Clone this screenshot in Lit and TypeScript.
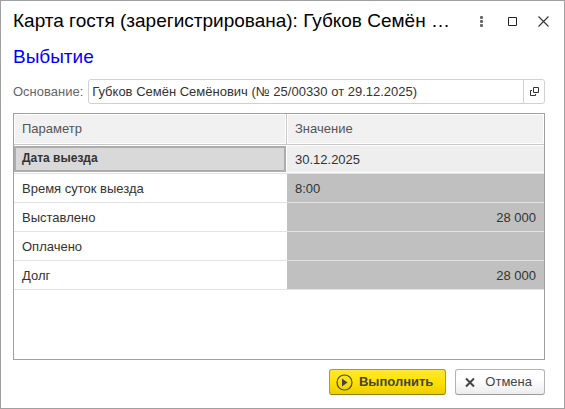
import { LitElement, html, css } from "lit";
import { customElement, property, state } from "lit/decorators.js";
import { classMap } from "lit/directives/class-map.js";

interface Row {
  name: string;
  value: string;
  numeric?: boolean;
  editable?: boolean;
}

@customElement("param-table")
export class ParamTable extends LitElement {
  @property({ attribute: false }) rows: Row[] = [];
  @state() private current = 0;

  static styles = css`
    :host {
      display: block;
      border: 1px solid #a0a0a0;
      background: #fff;
      overflow: auto;
    }
    table {
      width: 100%;
      table-layout: fixed;
      border-collapse: separate;
      border-spacing: 0;
    }
    .name-col {
      width: 273px;
    }
    th,
    td {
      box-sizing: border-box;
      height: 29px;
      padding: 2px 8px 0;
      text-align: left;
      font-weight: normal;
      white-space: nowrap;
      color: #333;
      border-bottom: 1px solid #e2e2e2;
    }
    th {
      height: 31px;
      padding: 0 8px;
      color: #555;
      background: #f1f1f1;
      border-bottom-color: #c8c8c8;
      box-shadow: inset 0 0 0 1px #fff;
    }
    th:first-child {
      border-right: 1px solid #c8c8c8;
    }
    .value {
      background: #c0c0c0;
    }
    .numeric {
      text-align: right;
    }
    .editable {
      background: #eee;
      box-shadow: inset 0 1px #fff, inset 0 -1px #fff;
    }
    .current {
      padding: 1px 1px 1px 0;
    }
    .mark {
      box-sizing: border-box;
      height: 26px;
      padding: 0 6px;
      border: 2px solid #acacac;
      background: #d9d9d9;
      font-weight: bold;
      font-size: 12px;
      line-height: 20px;
    }
  `;

  render() {
    return html`
      <table>
        <colgroup>
          <col class="name-col" />
          <col />
        </colgroup>
        <thead>
          <tr>
            <th scope="col">Параметр</th>
            <th scope="col">Значение</th>
          </tr>
        </thead>
        <tbody>
          ${this.rows.map(
            (row, i) => html`
              <tr @click=${() => (this.current = i)}>
                <td class=${classMap({ current: i === this.current })}>
                  ${i === this.current
                    ? html`<div class="mark">${row.name}</div>`
                    : row.name}
                </td>
                <td
                  class=${classMap({
                    value: true,
                    numeric: !!row.numeric,
                    editable: !!row.editable,
                  })}
                >
                  ${row.value}
                </td>
              </tr>
            `
          )}
        </tbody>
      </table>
    `;
  }
}

@customElement("app-root")
export class AppRoot extends LitElement {
  private rows: Row[] = [
    { name: "Дата выезда", value: "30.12.2025", editable: true },
    { name: "Время суток выезда", value: "8:00" },
    { name: "Выставлено", value: "28 000", numeric: true },
    { name: "Оплачено", value: "", numeric: true },
    { name: "Долг", value: "28 000", numeric: true },
  ];

  static styles = css`
    :host {
      box-sizing: border-box;
      display: flex;
      flex-direction: column;
      min-height: 100vh;
      border: 1px solid #a0a0a0;
      background: #fff;
      color: #333;
      font: 13px/16px "Liberation Sans", Arial, sans-serif;
    }
    button,
    input {
      font: inherit;
      color: inherit;
      margin: 0;
    }
    svg {
      display: block;
      flex: none;
    }
    header {
      display: flex;
      align-items: center;
      height: 40px;
      padding: 0 5px 0 12px;
    }
    h1,
    h2 {
      margin: 0;
      font-size: 19px;
      font-weight: normal;
      color: #000;
    }
    h1 {
      flex: 1;
      min-width: 0;
      line-height: 24px;
      white-space: nowrap;
      overflow: hidden;
      text-overflow: ellipsis;
    }
    .tool {
      display: flex;
      justify-content: center;
      align-items: center;
      width: 31px;
      height: 30px;
      padding: 0;
      border: 0;
      background: none;
    }
    main {
      flex: 1;
      display: flex;
      flex-direction: column;
      padding: 0 19px 13px 12px;
    }
    h2 {
      line-height: 32px;
      color: #00f;
    }
    .field {
      display: flex;
      align-items: center;
      gap: 5px;
      margin: 6px 0 9px;
    }
    .field label {
      color: #666;
    }
    .box {
      flex: 1;
      display: flex;
      box-sizing: border-box;
      height: 25px;
      border: 1px solid #d0d0d0;
      border-radius: 3px;
    }
    .box input {
      flex: 1;
      min-width: 0;
      padding: 0 3px;
      border: 0;
      outline: 0;
      background: none;
    }
    .open {
      display: flex;
      justify-content: center;
      align-items: center;
      width: 21px;
      padding: 0;
      border: 0;
      border-left: 1px solid #d0d0d0;
      background: none;
    }
    param-table {
      flex: 1;
    }
    footer {
      display: flex;
      justify-content: flex-end;
      gap: 9px;
      margin-top: 9px;
    }
    .action {
      box-sizing: border-box;
      display: flex;
      align-items: center;
      height: 26px;
      padding: 0 12px 0 6px;
      border: 1px solid #b4b4b4;
      border-bottom-color: #999;
      border-radius: 3px;
      background: linear-gradient(#fff 40%, #ececec);
      color: #444;
      gap: 6px;
    }
    .primary {
      border-color: #b09c12;
      border-bottom-color: #8f7d00;
      background: linear-gradient(#ffe833, #ffe100 50%, #ebcf00);
      font-weight: bold;
    }
  `;

  render() {
    return html`
      <header>
        <h1>Карта гостя (зарегистрирована): Губков Семён …</h1>
        <button class="tool" aria-label="Ещё">
          <svg width="11" height="11" viewBox="0 0 11 11" fill="#666">
            <rect x="4" y="0" width="3" height="3" rx="1" />
            <rect x="4" y="4" width="3" height="3" rx="1" />
            <rect x="4" y="8" width="3" height="3" rx="1" />
          </svg>
        </button>
        <button class="tool" aria-label="Развернуть">
          <svg width="9" height="9" viewBox="0 0 9 9" fill="none" stroke="#222">
            <path d="M.5 .5h8v8h-8z" />
          </svg>
        </button>
        <button class="tool" aria-label="Закрыть">
          <svg width="11" height="11" viewBox="0 0 11 11" fill="none" stroke="#333" stroke-width="1.1">
            <path d="M.5 .5l10 10M10.500 .5l-10 10" />
          </svg>
        </button>
      </header>
      <main>
        <h2>Выбытие</h2>
        <div class="field">
          <label for="basis">Основание:</label>
          <div class="box">
            <input id="basis" type="text" value="Губков Семён Семёнович (№ 25/00330 от 29.12.2025)" />
            <button class="open" aria-label="Открыть">
              <svg width="9" height="9" viewBox="0 0 9 9" fill="none" stroke="#333">
                <path d="M3.500 .5h5v5h-5zM2 3.500H.5v5h5V7" />
              </svg>
            </button>
          </div>
        </div>
        <param-table .rows=${this.rows}></param-table>
        <footer>
          <button class="action primary">
            <svg width="17" height="17" viewBox="0 0 17 17">
              <circle cx="8.500" cy="8.500" r="7.500" fill="none" stroke="#4d4722" stroke-width="1.200" />
              <path d="M6 4.500l5.500 4-5.500 4z" fill="#444" />
            </svg>
            Выполнить
          </button>
          <button class="action">
            <svg width="17" height="17" viewBox="0 0 17 17" fill="none" stroke="#444" stroke-width="2">
              <path d="M4 4.500l8 8M12 4.500l-8 8" />
            </svg>
            Отмена
          </button>
        </footer>
      </main>
    `;
  }
}
